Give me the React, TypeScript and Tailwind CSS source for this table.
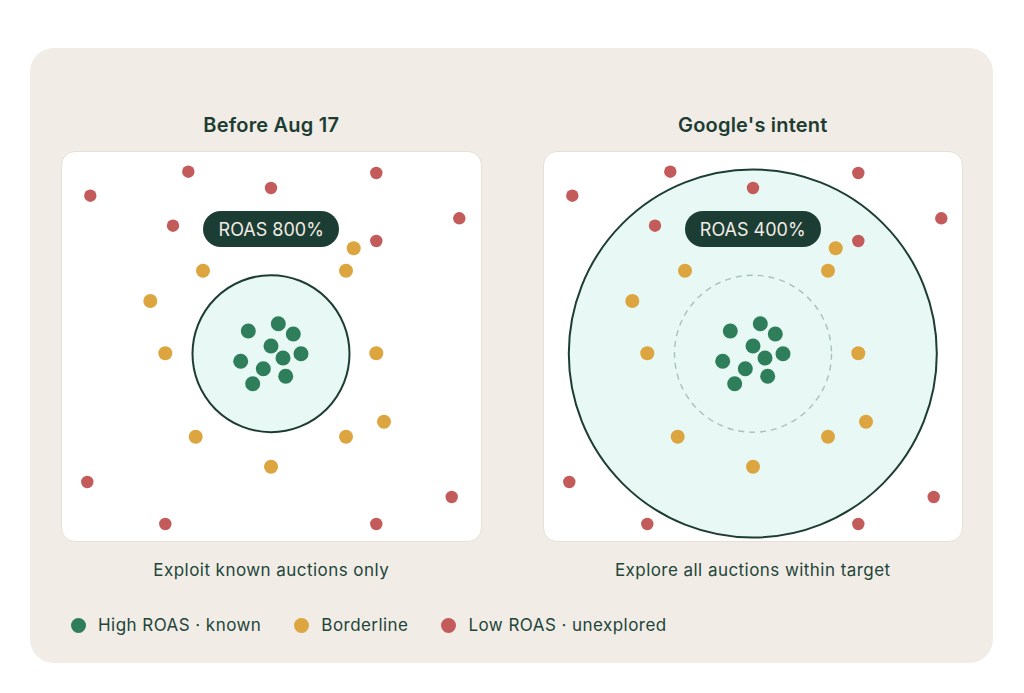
import React from "react";

type Pt = [number, number];

// positions measured in card space (420 x 391)
const RED: Pt[] = [
  [29.3, 44.7], [127.3, 20.7], [210, 37], [315.3, 22], [398.3, 67.3], [112, 74.7],
  [315.3, 90], [26.3, 331], [104.3, 373], [315.3, 373], [390.7, 346],
];
const AMBER: Pt[] = [
  [292.7, 97.3], [142, 119.7], [285, 119.7], [89.3, 150], [104.3, 202.3], [315.3, 202.3],
  [134.7, 285.7], [285, 285.7], [323, 270.7], [210, 315.7],
];
const GREEN: Pt[] = [
  [187.3, 180], [217.3, 172.7], [232.3, 183], [210, 195], [179.7, 210.3], [222, 207],
  [240, 202.7], [202.3, 217.7], [224.7, 225.3], [191.7, 232.7],
];

const font = { fontFamily: "Inter, 'Noto Sans', sans-serif" };

function Panel({ title, roas, caption, wide }: { title: string; roas: string; caption: string; wide?: boolean }) {
  return (
    <div className="flex flex-col">
      <h3 className="text-center text-[20px] leading-[28px] font-semibold tracking-[0.2px] text-[#1d3d33]">{title}</h3>
      <div className="relative mt-[12px] h-[391px] overflow-hidden rounded-[14px] border border-[#e6e0d6] bg-white">
        <svg viewBox="0 0 420 391" className="absolute -left-px -top-px h-[391px] w-[420px]">
          {wide ? (
            <>
              <circle cx={209.8} cy={202.5} r={184} fill="#e8f8f4" stroke="#1d3d33" strokeWidth={2} />
              <circle cx={210} cy={202.7} r={78.5} fill="none" stroke="#a9c2bb" strokeWidth={1.4} strokeDasharray="6 5" />
            </>
          ) : (
            <circle cx={210} cy={202.7} r={78.5} fill="#e8f8f4" stroke="#1d3d33" strokeWidth={2} />
          )}
          {RED.map(([x, y], i) => (
            <circle key={`r${i}`} cx={x} cy={y} r={6.2} fill="#c45b5b" />
          ))}
          {AMBER.map(([x, y], i) => (
            <circle key={`a${i}`} cx={x} cy={y} r={7} fill="#dca540" />
          ))}
          {GREEN.map(([x, y], i) => (
            <circle key={`g${i}`} cx={x} cy={y} r={7.5} fill="#2e7d5b" />
          ))}
        </svg>
        <div className="absolute left-1/2 top-[59px] flex h-[36px] w-[136px] -translate-x-1/2 items-center justify-center rounded-full bg-[#1c3d33] text-[18px] text-[#f1ece4]">
          {roas}
        </div>
      </div>
      <p className="mt-[16px] text-center text-[17px] leading-[24px] tracking-[0.45px] text-[#22453a]">{caption}</p>
    </div>
  );
}

function LegendItem({ color, label }: { color: string; label: string }) {
  return (
    <div className="flex items-center gap-3">
      <span className="h-[15px] w-[15px] rounded-full" style={{ backgroundColor: color }} />
      <span className="text-[17px] leading-[24px] tracking-[0.45px] text-[#22453a]">{label}</span>
    </div>
  );
}

export default function App() {
  return (
    <div className="h-[693px] bg-white pl-[30px] pr-[31px] pt-[48px]" style={font}>
      <div className="h-[615px] rounded-[24px] bg-[#f1ece5] pl-[31px] pr-[30px] pt-[63px]">
        <div className="grid grid-cols-2 gap-[61px]">
          <Panel title="Before Aug 17" roas="ROAS 800%" caption="Exploit known auctions only" />
          <Panel title="Google's intent" roas="ROAS 400%" caption="Explore all auctions within target" wide />
        </div>
        <div className="mt-[31px] flex items-center gap-[33px] pl-[10px]">
          <LegendItem color="#2e7d5b" label="High ROAS · known" />
          <LegendItem color="#dca540" label="Borderline" />
          <LegendItem color="#c45b5b" label="Low ROAS · unexplored" />
        </div>
      </div>
    </div>
  );
}
